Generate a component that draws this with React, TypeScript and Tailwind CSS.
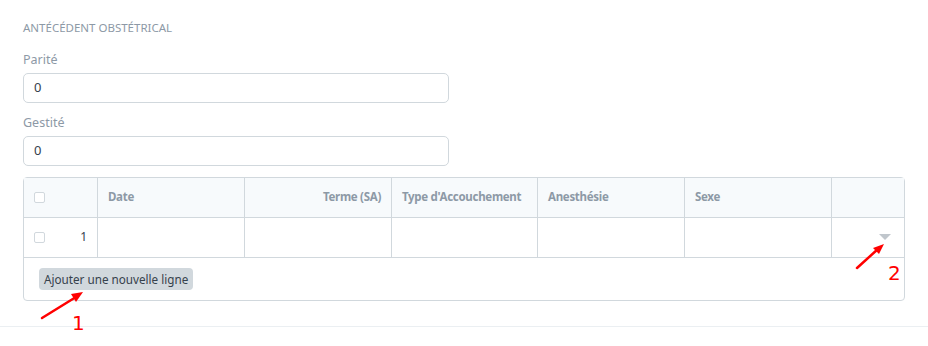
const columns = [
  { name: "Date", align: "left" },
  { name: "Terme (SA)", align: "right" },
  { name: "Type d'Accouchement", align: "left" },
  { name: "Anesthésie", align: "left" },
  { name: "Sexe", align: "left" },
];

const font = { fontFamily: '"Noto Sans", "Open Sans", sans-serif' };

const Field = ({ label, value }: { label: string; value: string }) => (
  <div>
    <div className="h-[18px] text-[12.5px] leading-[18px] text-[#8d99a6]">{label}</div>
    <div className="mt-[4px] flex h-[30px] w-[426px] items-center rounded-[5px] border border-[#d1d8dd] px-[10px] text-[13px] text-[#36414c]">
      {value}
    </div>
  </div>
);

const Checkbox = () => (
  <span className="block h-[11px] w-[11px] rounded-[2px] border border-[#d1d8dd] bg-white" />
);

const Annotations = () => (
  <svg className="pointer-events-none absolute inset-0" width="928" height="346">
    <g stroke="#ff0000" strokeWidth="2.5" strokeLinecap="round" fill="#ff0000">
      <line x1="42" y1="318" x2="76" y2="297" />
      <polygon points="83,292 71,294 76,302" stroke="none" />
      <line x1="857" y1="268" x2="878" y2="249" />
      <polygon points="884,244 873,248 879,254" stroke="none" />
    </g>
    <g fill="#ff0000" fontSize="20" style={{ fontFamily: '"DejaVu Sans", sans-serif' }}>
      <text x="72" y="330">1</text>
      <text x="888" y="280">2</text>
    </g>
  </svg>
);

export default function App() {
  return (
    <div className="relative h-[346px] w-[928px] bg-white" style={font}>
      <div className="border-b border-[#ebeff2] px-[23px] pb-[25px] pt-[20px]">
        <div className="h-[16px] text-[11.5px] leading-[16px] text-[#8d99a6]">
          ANTÉCÉDENT OBSTÉTRICAL
        </div>

        <div className="mt-[15px]">
          <Field label="Parité" value="0" />
        </div>
        <div className="mt-[11px]">
          <Field label="Gestité" value="0" />
        </div>

        <div className="mt-[11px] rounded-[4px] border border-[#d1d8dd]">
          <div className="grid h-[40px] grid-cols-[73px_147px_147px_146px_147px_147px_1fr] border-b border-[#d1d8dd] bg-[#f7fafc] text-[11.5px] font-bold tracking-[-0.3px] text-[#8d99a6]">
            <div className="flex items-center px-[10px]">
              <Checkbox />
            </div>
            {columns.map((col) => (
              <div
                key={col.name}
                className={
                  col.align === "right"
                    ? "flex items-center justify-end whitespace-nowrap border-l border-[#d1d8dd] px-[10px] pb-[2px]"
                    : "flex items-center whitespace-nowrap border-l border-[#d1d8dd] px-[10px] pb-[2px]"
                }
              >
                {col.name}
              </div>
            ))}
            <div className="border-l border-[#d1d8dd]" />
          </div>

          <div className="grid h-[40px] grid-cols-[73px_147px_147px_146px_147px_147px_1fr] border-b border-[#d1d8dd] text-[12px] text-[#36414c]">
            <div className="flex items-center justify-between px-[10px]">
              <Checkbox />
              <span className="pb-[2px]">1</span>
            </div>
            {columns.map((col) => (
              <div key={col.name} className="border-l border-[#d1d8dd]" />
            ))}
            <div className="flex items-start justify-end border-l border-[#d1d8dd] pr-[13px] pt-[16px]">
              <span className="block h-0 w-0 border-x-[6px] border-t-[6px] border-x-transparent border-t-[#c0c6cc]" />
            </div>
          </div>

          <div className="flex h-[42px] items-center px-[15px] pb-[1px]">
            <button className="h-[22px] rounded-[4px] bg-[#d1d8dd] px-[5px] text-[11.7px] leading-[22px] text-[#36414c]">
              Ajouter une nouvelle ligne
            </button>
          </div>
        </div>
      </div>
      <Annotations />
    </div>
  );
}
